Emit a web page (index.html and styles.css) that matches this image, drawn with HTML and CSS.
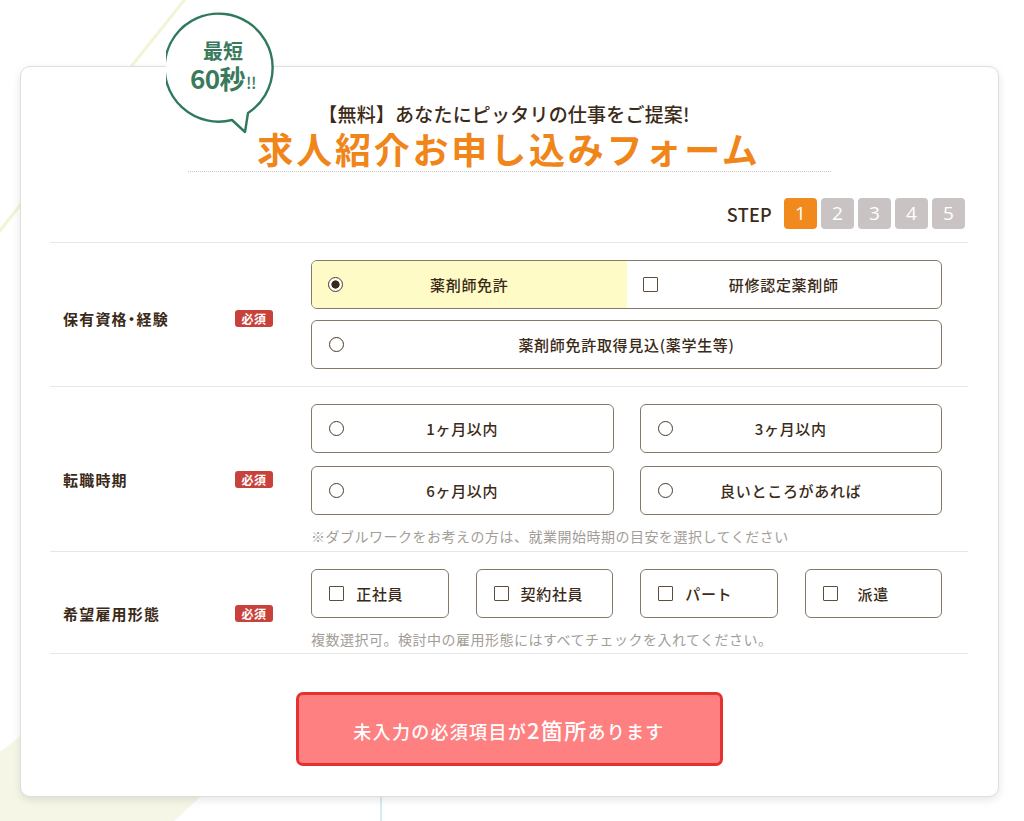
FILE: index.html
```html
<!DOCTYPE html>
<html lang="ja">
<head>
<meta charset="utf-8">
<title>求人紹介お申し込みフォーム</title>
<link rel="stylesheet" href="styles.css">
</head>
<body>
<div class="bg" aria-hidden="true">
  <svg width="1024" height="821" viewBox="0 0 1024 821">
    <line x1="186" y1="-2" x2="-2" y2="233" stroke="#f3f3d6" stroke-width="3"/>
    <polygon points="0,752 125,655 235,765 174,821 0,821" fill="#f5f6e6"/>
    <line x1="381" y1="790" x2="381" y2="821" stroke="#d2eef2" stroke-width="2"/>
  </svg>
</div>
<main class="card">
  <div class="bubble">
    <svg class="bubble-shape" width="114" height="126" viewBox="0 0 114 126">
      <path d="M82 103 A54 54 0 1 0 66 110 L79 122 Z" fill="#fff" stroke="#2f7a5b" stroke-width="2.4" stroke-linejoin="round"/>
    </svg>
    <div class="bubble-text">
      <span class="b1">最短</span>
      <span class="b2">60秒<small>!!</small></span>
    </div>
  </div>

  <header class="head">
    <p class="sub">【無料】あなたにピッタリの仕事をご提案!</p>
    <h1 class="title">求人紹介お申し込みフォーム</h1>
  </header>

  <div class="steps">
    <span class="steps-label">STEP</span>
    <span class="step active">1</span>
    <span class="step">2</span>
    <span class="step">3</span>
    <span class="step">4</span>
    <span class="step">5</span>
  </div>

  <div class="table">
    <section class="row">
      <div class="row-head"><span class="label">保有資格・経験</span><span class="badge">必須</span></div>
      <div class="row-body">
        <div class="stack">
          <div class="opt split">
            <div class="half selected"><span class="radio checked"></span><span class="opt-text">薬剤師免許</span></div>
            <div class="half"><span class="check"></span><span class="opt-text">研修認定薬剤師</span></div>
          </div>
          <div class="opt"><span class="radio"></span><span class="opt-text">薬剤師免許取得見込(薬学生等)</span></div>
        </div>
      </div>
    </section>

    <section class="row has-note">
      <div class="row-head"><span class="label">転職時期</span><span class="badge">必須</span></div>
      <div class="row-body">
        <div class="grid2">
          <div class="opt"><span class="radio"></span><span class="opt-text">1ヶ月以内</span></div>
          <div class="opt"><span class="radio"></span><span class="opt-text">3ヶ月以内</span></div>
          <div class="opt"><span class="radio"></span><span class="opt-text">6ヶ月以内</span></div>
          <div class="opt"><span class="radio"></span><span class="opt-text">良いところがあれば</span></div>
        </div>
        <p class="note">※ダブルワークをお考えの方は、就業開始時期の目安を選択してください</p>
      </div>
    </section>

    <section class="row has-note last">
      <div class="row-head"><span class="label">希望雇用形態</span><span class="badge">必須</span></div>
      <div class="row-body">
        <div class="grid4">
          <div class="opt"><span class="check"></span><span class="opt-text">正社員</span></div>
          <div class="opt"><span class="check"></span><span class="opt-text">契約社員</span></div>
          <div class="opt"><span class="check"></span><span class="opt-text">パート</span></div>
          <div class="opt"><span class="check"></span><span class="opt-text">派遣</span></div>
        </div>
        <p class="note">複数選択可。検討中の雇用形態にはすべてチェックを入れてください。</p>
      </div>
    </section>
  </div>

  <div class="submit-wrap">
    <button class="submit" type="button">未入力の必須項目が<span class="big">2箇所</span>あります</button>
  </div>
</main>
</body>
</html>
```
FILE: styles.css
```css
* { box-sizing: border-box; }
html, body { margin: 0; padding: 0; }
body {
  width: 1024px;
  height: 821px;
  overflow: hidden;
  background: #fff;
  font-family: "Noto Sans CJK JP", "Noto Sans", sans-serif;
  color: #3b2a17;
  position: relative;
}
.bg {
  position: absolute;
  left: 0;
  top: 0;
  z-index: 0;
}
.bg svg { display: block; }

.card {
  position: relative;
  z-index: 1;
  width: 979px;
  margin: 66px 0 0 20px;
  padding: 0 30px 30px 29px;
  background: #fff;
  border: 1px solid #dedede;
  border-radius: 10px;
  box-shadow: 0 3px 9px rgba(0, 0, 0, 0.10);
}

/* speech bubble */
.bubble {
  position: absolute;
  left: 145px;
  top: -57px;
  width: 114px;
  height: 126px;
}
.bubble-shape { display: block; }
.bubble-text {
  position: absolute;
  left: 0;
  top: 0;
  width: 114px;
  padding-top: 29px;
  display: flex;
  flex-direction: column;
  align-items: center;
  color: #3a7a5c;
  font-weight: 700;
}
.b1 { font-size: 20px; line-height: 24px; }
.b2 { font-size: 26px; line-height: 30px; letter-spacing: -0.5px; }
.b2 small { font-size: 16px; font-weight: 500; margin-left: 1px; }

/* header */
.head {
  width: 643px;
  margin: 0 auto;
  padding-top: 34px;
  padding-bottom: 3px;
  border-bottom: 1px dotted #c8c8c8;
  text-align: center;
}
.sub {
  margin: 0 10px 0 0;
  font-size: 19px;
  line-height: 26px;
  font-weight: 500;
  letter-spacing: 0.2px;
  color: #3b2a17;
}
.title {
  margin: 1px 0 0;
  font-size: 36px;
  line-height: 40px;
  font-weight: 700;
  letter-spacing: 2.8px;
  color: #f08519;
}

/* steps */
.steps {
  margin-top: 26px;
  display: flex;
  justify-content: flex-end;
  align-items: center;
  gap: 4px;
  padding-right: 3px;
}
.steps-label {
  font-size: 18px;
  font-weight: 500;
  margin-right: 8px;
  color: #3b2a17;
  letter-spacing: 0.3px;
}
.step {
  width: 33px;
  height: 31px;
  border-radius: 4px;
  background: #c9c4c3;
  color: #fff;
  font-family: "Open Sans", "Noto Sans", sans-serif;
  font-size: 19px;
  line-height: 31px;
  text-align: center;
}
.step.active { background: #f18a1d; }

/* table */
.table {
  margin-top: 13px;
  border-top: 1px solid #e6e6e6;
}
.row {
  display: flex;
  align-items: center;
  padding: 17px 0 17px;
  border-bottom: 1px solid #e6e6e6;
}
.row.has-note { padding-bottom: 5px; }
.row.last { padding-bottom: 4px; }
.row-head {
  display: flex;
  align-items: center;
  width: 261px;
  padding: 8px 0 0 13px;
  flex: none;
}
.label {
  width: 172px;
  font-size: 15px;
  font-weight: 700;
  letter-spacing: 1.2px;
  font-feature-settings: "palt";
}
.badge {
  width: 38px;
  height: 17px;
  border-radius: 3px;
  background: #c8423b;
  color: #fff;
  font-size: 12px;
  line-height: 17px;
  font-weight: 700;
  text-align: center;
  letter-spacing: 0.5px;
}
.row-body { width: 631px; flex: none; }

.stack { display: flex; flex-direction: column; gap: 11px; }
.grid2 {
  display: grid;
  grid-template-columns: minmax(0, 1fr) minmax(0, 1fr);
  column-gap: 26px;
  row-gap: 13px;
}
.grid4 {
  display: grid;
  grid-template-columns: repeat(4, minmax(0, 1fr));
  column-gap: 27px;
}

.opt, .half {
  display: grid;
  grid-template-columns: 15px minmax(0, 1fr) 15px;
  column-gap: 12px;
  align-items: center;
  height: 49px;
  padding: 0 17px;
}
.opt {
  border: 1px solid #86796a;
  border-radius: 6px;
  background: #fff;
}
.opt.split {
  display: flex;
  gap: 0;
  padding: 0;
  overflow: hidden;
}
.half {
  flex: 1 1 0;
  min-width: 0;
  height: 47px;
  padding: 0 16px;
}
.half.selected { background: #fffbc6; }

.opt-text {
  grid-column: 2;
  grid-row: 1;
  text-align: center;
  font-size: 15px;
  font-weight: 500;
  letter-spacing: 0.7px;
  white-space: nowrap;
}
.radio, .check {
  grid-column: 1;
  grid-row: 1;
  width: 15px;
  height: 15px;
  display: block;
  border: 1.4px solid #4a3b2b;
  background: #fff;
}
.radio { border-radius: 50%; }
.radio.checked { border-width: 1.6px; background: radial-gradient(circle, #3b2a17 0 3.8px, #fff 4.4px); }
.check { border: 1.5px solid #5c4d3d; border-radius: 1px; }

.note {
  margin: 11px 0 0;
  font-size: 14px;
  line-height: 20px;
  color: #a39d97;
  letter-spacing: 0.5px;
  white-space: nowrap;
}

/* submit */
.submit-wrap {
  display: flex;
  justify-content: center;
  margin-top: 38px;
}
.submit {
  width: 427px;
  height: 74px;
  border: 3px solid #e5312f;
  border-radius: 7px;
  background: #ff8080;
  color: #fff;
  font-family: "Noto Sans CJK JP", "Noto Sans", sans-serif;
  font-size: 18px;
  font-weight: 500;
  letter-spacing: 1.3px;
  padding: 0;
}
.submit .big { font-size: 22px; }
```
